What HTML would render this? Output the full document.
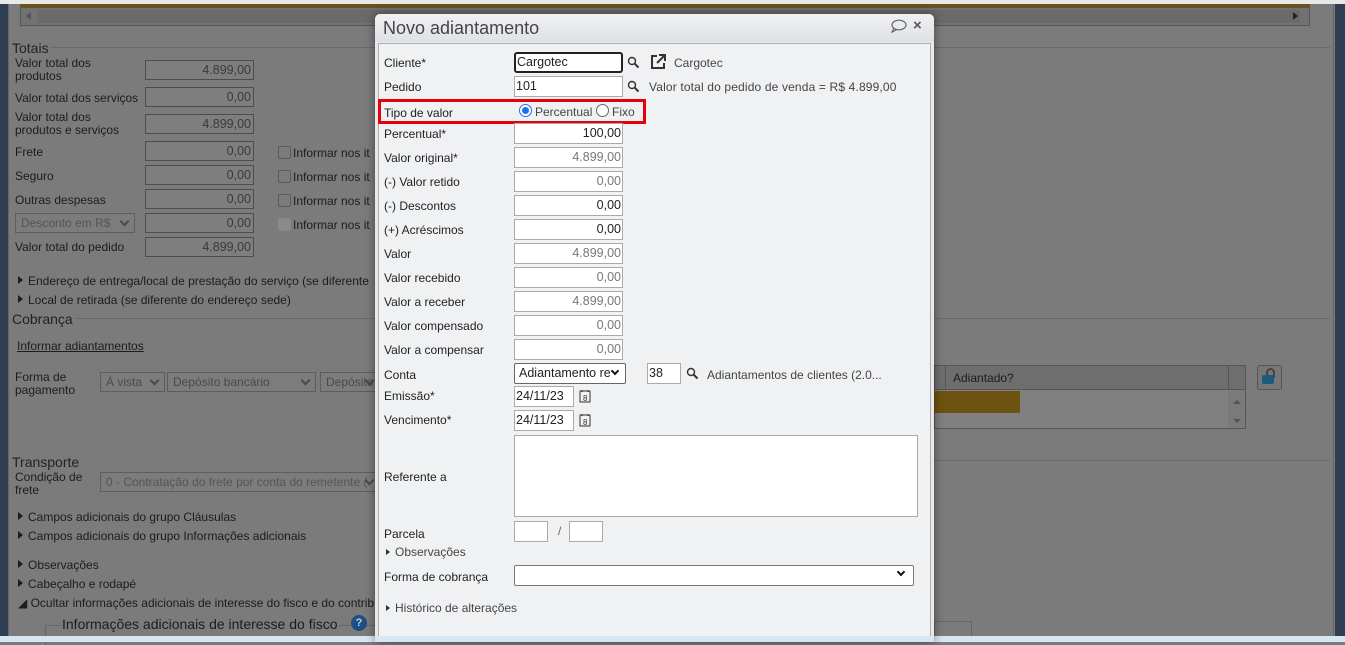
<!DOCTYPE html>
<html><head><meta charset="utf-8"><style>
*{box-sizing:border-box;margin:0;padding:0}
body{width:1345px;height:642px;overflow:hidden;background:#7b7b7b;font-family:"Liberation Sans","DejaVu Sans",sans-serif;font-size:12px;color:#1c1c1c;position:relative}
.a{position:absolute;white-space:nowrap}
.bi{position:absolute;height:20px;border:1px solid #4d4d4d;background:#7e7e7e;color:#3a3a3a;text-align:right;padding-right:2px;line-height:18px;font-size:12.5px}
.cb{position:absolute;width:13px;height:13px;border:1px solid #5a5a5a;border-radius:2px}
.sel{position:absolute;height:20px;border:1px solid #5e5e5e;background:#7c7c7c;color:#4a4a4a;padding-left:5px;line-height:18px;font-size:12px}
.sel:after{content:"";position:absolute;right:6px;top:4px;width:5px;height:5px;border-right:2px solid #4a4a4a;border-bottom:2px solid #4a4a4a;transform:rotate(45deg)}
.tri{display:inline-block;width:0;height:0;border-left:5px solid #1c1c1c;border-top:4px solid transparent;border-bottom:4px solid transparent;margin-right:5px;vertical-align:1px}
.m{position:absolute;color:#222;font-size:12px}
.in{position:absolute;height:21px;border:1px solid #aaa;background:#fff;text-align:right;padding-right:1px;line-height:19px;font-size:12.5px;color:#222}
.dis{color:#777}
</style></head><body>
<div class="a" style="left:0;top:0;width:8px;height:642px;background:#2e3d52"></div>
<div class="a" style="left:8px;top:0;width:1326px;height:642px;border-left:1px solid #666;border-right:1px solid #666"></div>
<div class="a" style="left:1335px;top:0;width:10px;height:642px;background:#2e3d52"></div>
<div class="a" style="left:0;top:0;width:1345px;height:4px;background:#e8e8e8"></div>
<div class="a" style="left:20px;top:4px;width:1290px;height:3px;background:#6e520f"></div>
<div class="a" style="left:20px;top:7px;width:1290px;height:19px;border:1px solid #555;background:#727272"></div>
<div class="a" style="left:38px;top:10px;width:1262px;height:13px;background:#6a6a6a"></div>
<div class="a" style="left:26px;top:12px;border-right:5px solid #555;border-top:4px solid transparent;border-bottom:4px solid transparent"></div>
<div class="a" style="left:1293px;top:12px;border-left:5px solid #222;border-top:4px solid transparent;border-bottom:4px solid transparent"></div>
<div class="a" style="left:50px;top:47px;width:1280px;height:1px;background:#6a6a6a"></div>
<div class="a" style="left:12px;top:40px;font-size:14px;color:#222">Totais</div>
<div class="a" style="left:15px;top:57px;line-height:13px">Valor total dos<br>produtos</div>
<div class="bi" style="left:145px;top:60px;width:109px">4.899,00</div>
<div class="a" style="left:15px;top:91px">Valor total dos serviços</div>
<div class="bi" style="left:145px;top:87px;width:109px">0,00</div>
<div class="a" style="left:15px;top:111px;line-height:13px">Valor total dos<br>produtos e serviços</div>
<div class="bi" style="left:145px;top:114px;width:109px">4.899,00</div>
<div class="a" style="left:15px;top:145px">Frete</div>
<div class="bi" style="left:145px;top:141px;width:109px">0,00</div>
<div class="a" style="left:15px;top:169px">Seguro</div>
<div class="bi" style="left:145px;top:165px;width:109px">0,00</div>
<div class="a" style="left:15px;top:193px">Outras despesas</div>
<div class="bi" style="left:145px;top:189px;width:109px">0,00</div>
<div class="sel" style="left:15px;top:213px;width:120px;color:#555">Desconto em R$</div>
<div class="bi" style="left:145px;top:213px;width:109px">0,00</div>
<div class="a" style="left:15px;top:240px">Valor total do pedido</div>
<div class="bi" style="left:145px;top:237px;width:109px">4.899,00</div>
<div class="cb" style="left:278px;top:146px"></div><div class="a" style="left:293px;top:146px">Informar nos it</div>
<div class="cb" style="left:278px;top:170px"></div><div class="a" style="left:293px;top:170px">Informar nos it</div>
<div class="cb" style="left:278px;top:194px"></div><div class="a" style="left:293px;top:194px">Informar nos it</div>
<div class="cb" style="left:278px;top:218px;background:#8a8a8a;border-color:#888"></div><div class="a" style="left:293px;top:218px">Informar nos it</div>
<div class="a" style="left:18px;top:274px"><span class="tri"></span>Endereço de entrega/local de prestação do serviço (se diferente</div>
<div class="a" style="left:18px;top:293px"><span class="tri"></span>Local de retirada (se diferente do endereço sede)</div>
<div class="a" style="left:12px;top:311px;font-size:14px;color:#222">Cobrança</div>
<div class="a" style="left:75px;top:318px;width:1255px;height:1px;background:#6a6a6a"></div>
<div class="a" style="left:17px;top:339px;text-decoration:underline">Informar adiantamentos</div>
<div class="a" style="left:15px;top:371px;line-height:13px">Forma de<br>pagamento</div>
<div class="sel" style="left:100px;top:372px;width:65px">À vista</div>
<div class="sel" style="left:167px;top:372px;width:149px">Depósito bancário</div>
<div class="sel" style="left:320px;top:372px;width:60px">Depósito</div>
<div class="a" style="left:934px;top:365px;width:312px;height:25px;border:1px solid #555;background:#6e6e6e"></div>
<div class="a" style="left:953px;top:371px">Adiantado?</div>
<div class="a" style="left:945px;top:365px;width:1px;height:25px;background:#555"></div>
<div class="a" style="left:1228px;top:365px;width:1px;height:25px;background:#555"></div>
<div class="a" style="left:934px;top:390px;width:312px;height:39px;border:1px solid #555;border-top:0;background:#808080"></div>
<div class="a" style="left:1228px;top:390px;width:17px;height:38px;background:#7a7a7a"></div>
<div class="a" style="left:1233px;top:400px;border-bottom:4px solid #555;border-left:4px solid transparent;border-right:4px solid transparent"></div>
<div class="a" style="left:1233px;top:419px;border-top:4px solid #555;border-left:4px solid transparent;border-right:4px solid transparent"></div>
<div class="a" style="left:934px;top:391px;width:86px;height:22px;background:#6e520f"></div>
<div class="a" style="left:1257px;top:365px;width:25px;height:25px;border:1px solid #555;border-radius:3px;background:#777"></div>
<div class="a" style="left:1266px;top:368px;width:9px;height:10px;border:2px solid #444;border-bottom:0;border-radius:5px 5px 0 0"></div>
<div class="a" style="left:1262px;top:375px;width:12px;height:9px;background:#1d5a80;border-radius:2px"></div>
<div class="a" style="left:934px;top:460px;width:396px;height:1px;background:#6a6a6a"></div>
<div class="a" style="left:12px;top:454px;font-size:14px;color:#222">Transporte</div>
<div class="a" style="left:15px;top:471px;line-height:13px">Condição de<br>frete</div>
<div class="sel" style="left:100px;top:472px;width:280px;color:#555">0 - Contratação do frete por conta do remetente (</div>
<div class="a" style="left:18px;top:510px"><span class="tri"></span>Campos adicionais do grupo Cláusulas</div>
<div class="a" style="left:18px;top:529px"><span class="tri"></span>Campos adicionais do grupo Informações adicionais</div>
<div class="a" style="left:18px;top:558px"><span class="tri"></span>Observações</div>
<div class="a" style="left:18px;top:577px"><span class="tri"></span>Cabeçalho e rodapé</div>
<div class="a" style="left:18px;top:596px">◢ Ocultar informações adicionais de interesse do fisco e do contrib</div>
<div class="a" style="left:45px;top:625px;width:330px;height:20px;border-left:1px solid #666;border-top:1px solid #666"></div>
<div class="a" style="left:62px;top:616px;font-size:14px;background:#7b7b7b;padding-right:2px">Informações adicionais de interesse do fisco</div>
<div class="a" style="left:351px;top:615px;width:16px;height:16px;border-radius:50%;background:#1c4f86;color:#ccc;font-size:11px;font-weight:bold;text-align:center;line-height:16px">?</div>
<div class="a" style="left:934px;top:621px;width:38px;height:20px;border:1px solid #666"></div>
<div class="a" style="left:0;top:636px;width:1345px;height:6px;background:#d6e6f2"></div>

<div class="a" style="left:375px;top:14px;width:559px;height:628px;background:#e6e8ea;border-radius:5px 5px 0 0;box-shadow:0 0 10px rgba(0,0,0,.45)"></div>
<div class="a" style="left:375px;top:14px;width:559px;height:28px;background:linear-gradient(#f0f1f3,#dfe1e4);border-radius:5px 5px 0 0"></div>
<div class="a" style="left:383px;top:18px;font-size:18px;color:#444">Novo adiantamento</div>
<svg class="a" style="left:890px;top:19px" width="18" height="14" viewBox="0 0 18 14"><ellipse cx="9" cy="6" rx="7" ry="4.8" fill="none" stroke="#666" stroke-width="1.2"/><path d="M4 9 L2 13 L7 10.5" fill="none" stroke="#666" stroke-width="1.2"/></svg>
<div class="a" style="left:913px;top:17px;font-size:15px;font-weight:bold;color:#555">×</div>
<div class="a" style="left:378px;top:43px;width:553px;height:599px;background:#f0f1f3;border:1px solid #a9b0b8;border-bottom:0"></div>

<div class="m" style="left:384px;top:56px">Cliente*</div>
<div class="in" style="left:514px;top:52px;width:109px;border:2px solid #222;border-radius:3px;text-align:left;padding-left:1px;line-height:17px">Cargotec</div>
<div class="m" style="left:384px;top:80px">Pedido</div>
<div class="in" style="left:514px;top:76px;width:109px;text-align:left;padding-left:1px">101</div>
<svg class="a" style="left:627px;top:56px" width="13" height="13" viewBox="0 0 13 13"><circle cx="5" cy="5" r="3.5" fill="none" stroke="#333" stroke-width="1.4"/><path d="M7.5 7.5L11.5 11.5" stroke="#333" stroke-width="2"/></svg>
<svg class="a" style="left:627px;top:80px" width="13" height="13" viewBox="0 0 13 13"><circle cx="5" cy="5" r="3.5" fill="none" stroke="#333" stroke-width="1.4"/><path d="M7.5 7.5L11.5 11.5" stroke="#333" stroke-width="2"/></svg>
<svg class="a" style="left:650px;top:53px" width="17" height="17" viewBox="0 0 17 17"><path d="M7 3H2V15H14V10" fill="none" stroke="#333" stroke-width="2"/><path d="M7 10L14 3M9 2H15V8" fill="none" stroke="#333" stroke-width="2"/></svg>
<div class="m" style="left:674px;top:56px;color:#444">Cargotec</div>
<div class="m" style="left:649px;top:80px;color:#444;letter-spacing:0.15px">Valor total do pedido de venda = R$ 4.899,00</div>
<div class="a" style="left:378px;top:99px;width:268px;height:25px;border:3px solid #e8000a"></div>
<div class="m" style="left:384px;top:106px">Tipo de valor</div>
<div class="a" style="left:519px;top:104px;width:13px;height:13px;border-radius:50%;border:1px solid #1a73e8;background:#fff"></div>
<div class="a" style="left:522px;top:107px;width:7px;height:7px;border-radius:50%;background:#1a73e8"></div>
<div class="m" style="left:535px;top:105px;color:#444">Percentual</div>
<div class="a" style="left:596px;top:104px;width:13px;height:13px;border-radius:50%;border:1px solid #666;background:#fff"></div>
<div class="m" style="left:612px;top:105px;color:#444">Fixo</div>

<div class="m" style="left:384px;top:127px">Percentual*</div><div class="in" style="left:514px;top:123px;width:109px">100,00</div>
<div class="m" style="left:384px;top:151px">Valor original*</div><div class="in dis" style="left:514px;top:147px;width:109px">4.899,00</div>
<div class="m" style="left:384px;top:175px">(-) Valor retido</div><div class="in dis" style="left:514px;top:171px;width:109px">0,00</div>
<div class="m" style="left:384px;top:199px">(-) Descontos</div><div class="in" style="left:514px;top:195px;width:109px">0,00</div>
<div class="m" style="left:384px;top:223px">(+) Acréscimos</div><div class="in" style="left:514px;top:219px;width:109px">0,00</div>
<div class="m" style="left:384px;top:247px">Valor</div><div class="in dis" style="left:514px;top:243px;width:109px">4.899,00</div>
<div class="m" style="left:384px;top:271px">Valor recebido</div><div class="in dis" style="left:514px;top:267px;width:109px">0,00</div>
<div class="m" style="left:384px;top:295px">Valor a receber</div><div class="in dis" style="left:514px;top:291px;width:109px">4.899,00</div>
<div class="m" style="left:384px;top:319px">Valor compensado</div><div class="in dis" style="left:514px;top:315px;width:109px">0,00</div>
<div class="m" style="left:384px;top:343px">Valor a compensar</div><div class="in dis" style="left:514px;top:339px;width:109px">0,00</div>

<div class="m" style="left:384px;top:368px">Conta</div>
<div class="in" style="left:514px;top:363px;width:112px;text-align:left;padding-left:4px;border-color:#666;border-radius:2px">Adiantamento re</div>
<div class="a" style="left:612px;top:368px;width:6px;height:6px;border-right:2px solid #111;border-bottom:2px solid #111;transform:rotate(45deg)"></div>
<div class="in" style="left:647px;top:363px;width:34px;text-align:left;padding-left:1px">38</div>
<svg class="a" style="left:686px;top:367px" width="13" height="13" viewBox="0 0 13 13"><circle cx="5" cy="5" r="3.5" fill="none" stroke="#333" stroke-width="1.4"/><path d="M7.5 7.5L11.5 11.5" stroke="#333" stroke-width="2"/></svg>
<div class="m" style="left:707px;top:368px;color:#444">Adiantamentos de clientes (2.0...</div>
<div class="m" style="left:384px;top:389px">Emissão*</div>
<div class="in" style="left:514px;top:386px;width:60px;text-align:left;padding-left:1px">24/11/23</div>
<div class="m" style="left:384px;top:413px">Vencimento*</div>
<div class="in" style="left:514px;top:410px;width:60px;text-align:left;padding-left:1px">24/11/23</div>
<svg class="a" style="left:579px;top:389px" width="12" height="14" viewBox="0 0 12 14"><rect x="1" y="2" width="10" height="11" fill="none" stroke="#333"/><path d="M3 1V3M9 1V3" stroke="#333"/><text x="4" y="12" font-size="8" font-family="Liberation Sans" fill="#333">8</text></svg>
<svg class="a" style="left:579px;top:413px" width="12" height="14" viewBox="0 0 12 14"><rect x="1" y="2" width="10" height="11" fill="none" stroke="#333"/><path d="M3 1V3M9 1V3" stroke="#333"/><text x="4" y="12" font-size="8" font-family="Liberation Sans" fill="#333">8</text></svg>

<div class="m" style="left:384px;top:470px">Referente a</div>
<div class="a" style="left:514px;top:435px;width:404px;height:82px;border:1px solid #aaa;background:#fff"></div>
<div class="m" style="left:384px;top:527px">Parcela</div>
<div class="in" style="left:514px;top:521px;width:34px"></div>
<div class="m" style="left:558px;top:524px;color:#666">/</div>
<div class="in" style="left:569px;top:521px;width:34px"></div>
<div class="m" style="left:386px;top:545px;color:#444"><span class="tri" style="border-left-color:#333;border-left-width:4px;border-top-width:3px;border-bottom-width:3px"></span>Observações</div>
<div class="m" style="left:384px;top:570px">Forma de cobrança</div>
<div class="in" style="left:514px;top:565px;width:400px;border-color:#777;border-radius:2px"></div>
<div class="a" style="left:898px;top:569px;width:6px;height:6px;border-right:2px solid #111;border-bottom:2px solid #111;transform:rotate(45deg)"></div>
<div class="m" style="left:386px;top:601px;color:#444"><span class="tri" style="border-left-color:#333;border-left-width:4px;border-top-width:3px;border-bottom-width:3px"></span>Histórico de alterações</div>
<div class="a" style="left:375px;top:636px;width:559px;height:6px;background:#d6e6f2"></div>
</body></html>
